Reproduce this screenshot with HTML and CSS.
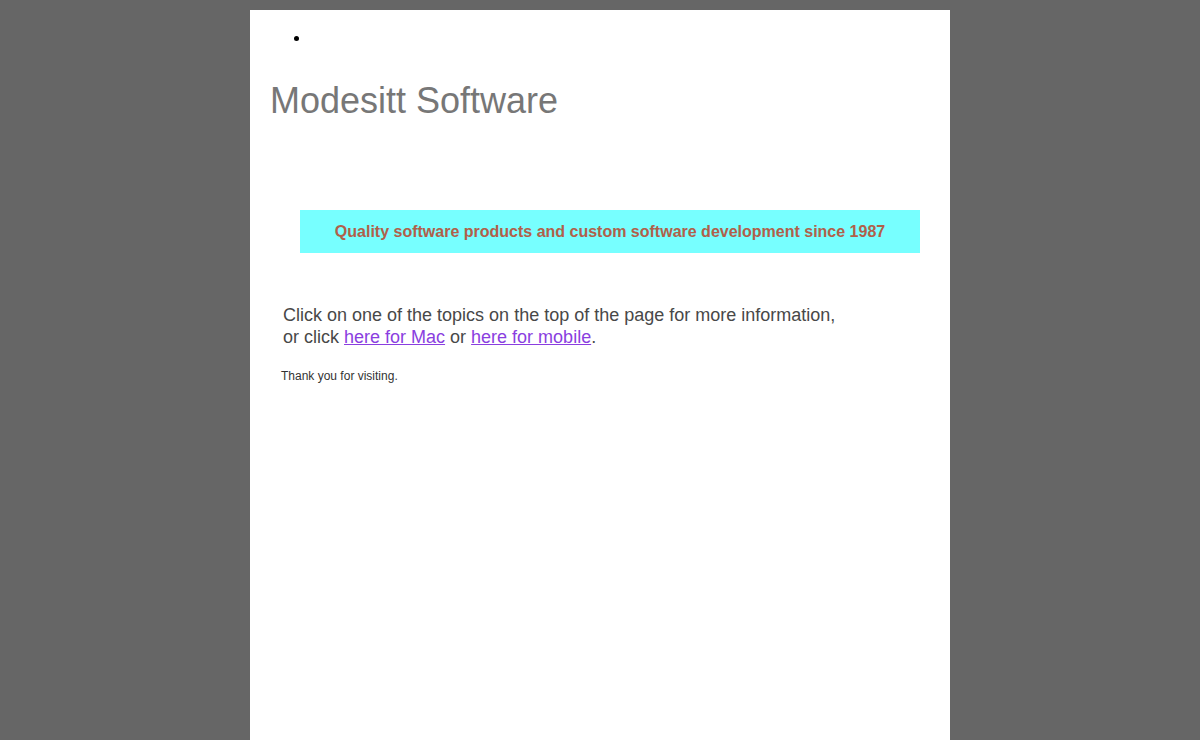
FILE: index.html
```html
<!DOCTYPE html>
<html>
<head>
<meta charset="utf-8">
<title>Modesitt Software</title>
<link rel="stylesheet" href="styles.css">
</head>
<body>
<div class="page">
  <ul class="topnav"><li></li></ul>
  <h1 class="title">Modesitt Software</h1>
  <div class="banner">Quality software products and custom software development since 1987</div>
  <p class="intro">Click on one of the topics on the top of the page for more information,<br>or click <a href="#">here for Mac</a> or <a href="#">here for mobile</a>.</p>
  <p class="thanks">Thank you for visiting.</p>
</div>
</body>
</html>
```
FILE: styles.css
```css
html, body {
  margin: 0;
  padding: 0;
  background: #666666;
  height: 100%;
}
body {
  font-family: "Liberation Sans", Arial, sans-serif;
}
.page {
  width: 700px;
  margin: 10px auto 0;
  background: #ffffff;
  min-height: 730px;
  box-sizing: border-box;
  padding: 19px 30px 0 20px;
  display: flow-root;
}
.topnav {
  margin: 0;
  padding-left: 40px;
  font-size: 16px;
  line-height: 18px;
  color: #000;
}
.topnav li {
  height: 18px;
}
.title {
  margin: 33px 0 0;
  font-size: 36px;
  font-weight: normal;
  color: #777777;
  line-height: 41px;
}
.banner {
  margin: 89px 0 0 30px;
  height: 43px;
  background: #77ffff;
  color: #b0604a;
  font-weight: bold;
  font-size: 16px;
  display: flex;
  align-items: center;
  justify-content: center;
}
.intro {
  margin: 51px 0 0 13px;
  font-size: 18px;
  line-height: 22px;
  color: #484848;
}
.intro a {
  color: #8a3ee0;
}
.thanks {
  margin: 21px 0 0 11px;
  font-size: 12px;
  color: #333333;
}
```
